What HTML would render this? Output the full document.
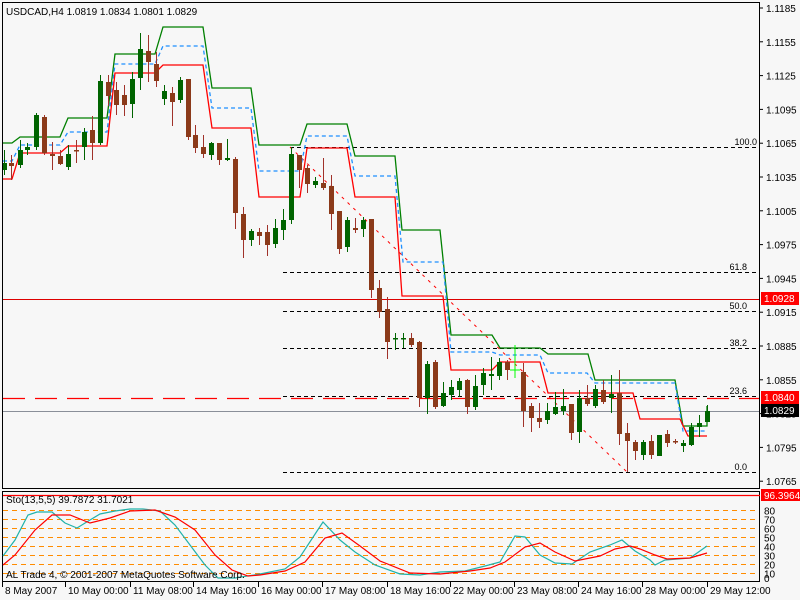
<!DOCTYPE html>
<html><head><meta charset="utf-8"><style>
html,body{margin:0;padding:0;background:#f7f7f7;}
svg{display:block;font-family:"Liberation Sans",sans-serif;}
</style></head><body>
<svg id="s" width="800" height="600" viewBox="0 0 800 600" xmlns="http://www.w3.org/2000/svg">
<rect width="800" height="600" fill="#f7f7f7"/>
<g id="fib" stroke="#000" stroke-dasharray="4,3" stroke-width="1">
<line x1="290" y1="147.5" x2="758" y2="147.5"/>
<line x1="283" y1="272.5" x2="758" y2="272.5"/>
<line x1="283" y1="311.5" x2="758" y2="311.5"/>
<line x1="283" y1="348.5" x2="758" y2="348.5"/>
<line x1="283" y1="396.5" x2="758" y2="396.5"/>
<line x1="283" y1="472.5" x2="758" y2="472.5"/>
</g>
<g font-size="9" fill="#000" text-anchor="end">
<text x="757" y="145">100.0</text><text x="747" y="270">61.8</text><text x="747" y="309">50.0</text>
<text x="747" y="346">38.2</text><text x="747" y="394">23.6</text><text x="747" y="470">0.0</text>
</g>
<line x1="290" y1="147" x2="627" y2="472" stroke="#f00" stroke-dasharray="3,5"/>
<line x1="3" y1="299.5" x2="760" y2="299.5" stroke="#d00"/>
<line x1="3" y1="398.5" x2="760" y2="398.5" stroke="#f00" stroke-dasharray="22,10" stroke-width="1.2"/>
<line x1="3" y1="411.5" x2="760" y2="411.5" stroke="#8a8f99"/>
<g fill="none" stroke-width="1.3">
<polyline id="gr" stroke="#008000" points="3,143 12,143 20,137 60,137 68,118 107,118 115,54 155,54 163,27 203,27 212,88 251,88 259,145 300,145 307,124 347,124 355,156 395,156 402,230 440,230 451,335 492,335 500,348 540,348 548,354 588,354 595,380 675,380 683,426 707,426 707,406"/>
<polyline stroke="#1e90ff" stroke-dasharray="4,3" points="3,161 12,161 20,145 60,145 68,132 107,132 115,64 155,64 163,46 203,46 212,108 251,108 259,171 300,171 307,136 347,136 355,176 395,176 403,262 443,262 451,352 492,352 500,355 540,355 548,373 587,373 595,383 675,383 683,431 707,431"/>
<polyline stroke="#f00" points="3,179 12,179 20,153 60,153 68,146 107,146 115,73 155,73 163,65 203,65 212,128 251,128 259,197 300,197 307,148 347,148 355,197 395,197 402,296 443,296 451,370 492,370 500,362 540,362 548,393 633,393 640,419 680,419 688,436 707,436"/>
</g>
<g id="c"></g>
<line x1="515" y1="345" x2="515" y2="378" stroke="#0f0"/><line x1="510" y1="370" x2="520" y2="370" stroke="#0f0"/>
<!-- frames -->
<rect x="2.5" y="2.5" width="757" height="486" fill="none" stroke="#000"/>
<rect x="2.5" y="491.5" width="757" height="90" fill="none" stroke="#000"/>
<text x="6" y="15" font-size="10">USDCAD,H4  1.0819 1.0834 1.0801 1.0829</text>
<g id="ax" font-size="10"></g>
<rect x="761" y="292" width="38" height="13" fill="#f00"/><text x="764" y="302" font-size="10" fill="#fff">1.0928</text>
<rect x="761" y="391" width="38" height="13" fill="#f00"/><text x="764" y="401" font-size="10" fill="#fff">1.0840</text>
<rect x="761" y="404" width="38" height="13" fill="#000"/><text x="764" y="414" font-size="10" fill="#fff">1.0829</text>
<!-- stochastic -->
<line x1="3" y1="495.5" x2="760" y2="495.5" stroke="#f00" stroke-width="1.2"/>
<g id="lv" stroke="#ff8c00" stroke-dasharray="5,4"></g>
<polyline fill="none" stroke="#20b2aa" stroke-width="1.2" points="3,556 15,540 28,515 37,512 52,512 65,523 77,528 90,520 100,514 115,511 130,509 143,509 160,511 175,525 190,545 205,565 218,578 235,578 260,574 285,569 300,557 323,522 340,540 355,552 375,565 400,574 420,575 440,572 465,571 485,566 500,562 515,536 525,537 540,555 555,563 572,564 590,552 610,545 622,540 635,551 650,560 655,565 665,560 690,558 707,546"/>
<polyline fill="none" stroke="#f00" stroke-width="1.2" points="3,565 15,555 35,530 52,515 70,515 90,523 110,518 130,511 155,510 175,517 195,530 215,555 232,570 248,576 260,575 285,571 305,562 325,538 342,533 360,546 380,561 410,573 440,574 470,571 490,568 505,562 525,547 540,543 555,552 575,561 600,556 615,549 630,546 640,549 655,555 667,559 690,558 707,553"/>
<text x="6" y="503" font-size="10">Sto(13,5,5) 39.7872 31.7021</text>
<text x="6" y="578" font-size="10">AL Trade 4, © 2001-2007 MetaQuotes Software Corp.</text>
<rect x="761" y="489" width="39" height="12" fill="#f00"/><text x="764" y="499" font-size="10" fill="#fff">96.3964</text>
<g id="sl" font-size="10"></g>
<g id="tl" font-size="10"></g>
</svg>
<script>
var NS="http://www.w3.org/2000/svg";
function el(p,t,a,txt){var e=document.createElementNS(NS,t);for(var k in a)e.setAttribute(k,a[k]);if(txt)e.textContent=txt;document.getElementById(p).appendChild(e);}
// x, open, close, high, low (pixel y); green if close<open (up)
var C=[[4,170,163,150,175],[11,163,166,155,180],[20,165,150,140,168],[27,150,147,143,155],[36,147,115,113,150],[44,117,153,115,155],[52,154,156,142,170],[60,156,164,150,165],[68,167,154,145,170],[76,150,151,140,163],[84,147,132,128,160],[92,130,143,116,160],[100,143,81,75,145],[108,82,96,75,106],[116,90,105,82,115],[124,95,105,85,116],[132,104,79,72,118],[140,78,49,33,90],[148,51,62,35,82],[156,64,81,52,87],[164,99,91,85,105],[172,93,102,87,126],[180,100,80,77,103],[188,79,137,79,140],[195,135,148,125,153],[203,147,154,135,158],[211,155,143,142,160],[219,143,160,143,165],[227,160,158,139,161],[235,159,213,157,229],[243,214,240,207,258],[251,240,231,229,246],[259,232,236,228,245],[267,232,245,225,256],[275,244,228,219,248],[283,230,220,209,240],[291,220,154,147,224],[299,155,170,155,188],[307,168,184,165,193],[315,185,181,177,188],[323,183,188,158,190],[331,186,214,175,230],[339,211,249,211,254],[347,247,220,217,252],[355,228,230,218,233],[363,229,220,217,237],[371,219,290,219,298],[379,288,312,280,318],[387,309,342,297,359],[395,339,338,333,350],[403,339,338,333,348],[411,338,345,333,347],[419,342,398,341,407],[427,398,364,361,414],[435,362,407,360,409],[443,406,393,382,407],[451,395,387,380,400],[459,390,381,378,397],[467,380,407,379,414],[475,407,386,375,410],[483,385,373,368,395],[491,376,374,357,390],[499,376,362,358,380],[507,362,370,360,380],[523,372,411,363,427],[531,406,418,403,432],[539,418,422,403,428],[547,420,411,403,424],[555,414,407,392,415],[563,411,406,389,415],[571,404,433,404,440],[579,432,398,390,443],[587,398,404,385,406],[595,406,389,385,408],[603,390,402,380,404],[611,398,394,375,413],[619,393,434,370,445],[627,433,441,423,472],[635,442,451,440,460],[643,455,442,440,460],[651,441,455,435,459],[659,456,435,435,456],[667,434,443,430,447],[675,441,442,439,444],[683,446,443,440,452],[691,445,427,423,446],[699,427,423,415,437],[707,422,411,405,422]];
C.forEach(function(c){var up=c[2]<c[1];var col=up?"#006400":"#8b3a1a";var wc=up?"#006400":"#a0322a";
el("c","line",{x1:c[0]+.5,x2:c[0]+.5,y1:c[3],y2:c[4],stroke:wc});
var t=Math.min(c[1],c[2]),b=Math.max(c[1],c[2]);el("c","rect",{x:c[0]-2,y:t,width:5,height:Math.max(b-t,1.5),fill:col});});
var P=["1.1185","1.1155","1.1125","1.1095","1.1065","1.1035","1.1005","1.0975","1.0945","1.0915","1.0885","1.0855","1.0825","1.0795","1.0765"];
P.forEach(function(p,i){var y=8+33.8*i;el("ax","line",{x1:760,x2:763,y1:y,y2:y,stroke:"#000"});el("ax","text",{x:766,y:y+4},p);});
[80,70,60,50,40,30,20,10].forEach(function(v){var y=582-0.9*v+.5;el("lv","line",{x1:3,x2:758,y1:y,y2:y});el("sl","text",{x:764,y:y+4},String(v));});
el("sl","text",{x:764,y:582},"0");
var T=[[2,"8 May 2007"],[65,"10 May 00:00"],[130,"11 May 08:00"],[193,"14 May 16:00"],[258,"16 May 00:00"],[322,"17 May 08:00"],[387,"18 May 16:00"],[450,"22 May 00:00"],[514,"23 May 08:00"],[578,"24 May 16:00"],[642,"28 May 00:00"],[707,"29 May 12:00"]];
T.forEach(function(t){el("tl","line",{x1:t[0]+.5,x2:t[0]+.5,y1:582,y2:587,stroke:"#000"});el("tl","text",{x:t[0]+3,y:594},t[1]);});
</script>
</body></html>
